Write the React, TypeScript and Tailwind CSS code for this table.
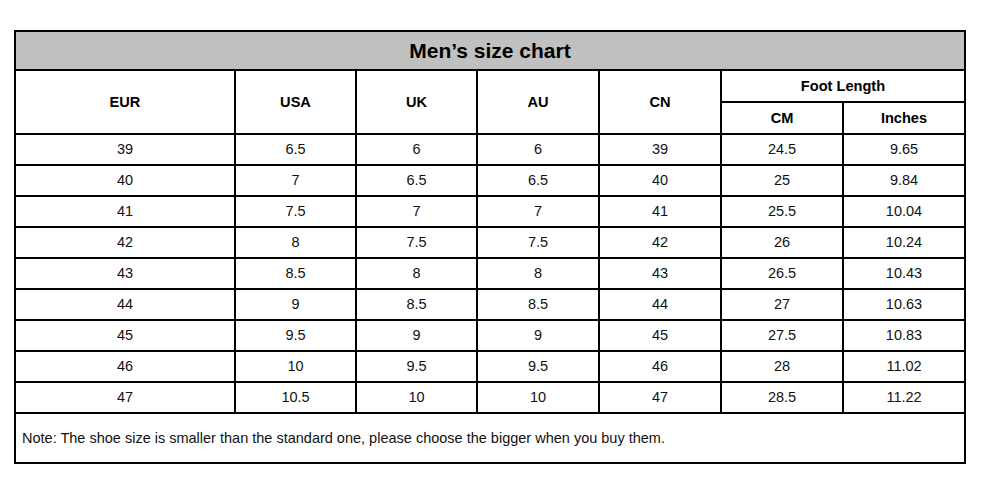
import React from "react";

const rows: string[][] = [
  ["39", "6.5", "6", "6", "39", "24.5", "9.65"],
  ["40", "7", "6.5", "6.5", "40", "25", "9.84"],
  ["41", "7.5", "7", "7", "41", "25.5", "10.04"],
  ["42", "8", "7.5", "7.5", "42", "26", "10.24"],
  ["43", "8.5", "8", "8", "43", "26.5", "10.43"],
  ["44", "9", "8.5", "8.5", "44", "27", "10.63"],
  ["45", "9.5", "9", "9", "45", "27.5", "10.83"],
  ["46", "10", "9.5", "9.5", "46", "28", "11.02"],
  ["47", "10.5", "10", "10", "47", "28.5", "11.22"],
];

export default function App() {
  return (
    <div className="w-[982px] h-[487px] bg-white pt-[30px] pl-[14px] font-['Liberation_Sans',Arial,sans-serif] text-[#111]">
      <div className="grid w-fit bg-black p-[2px] gap-[2px] grid-cols-[218px_119px_119px_120px_120px_120px_120px] grid-rows-[37px_30px_30px_repeat(9,29px)_48px]">
        <div className="col-span-7 bg-[#c0c0c0] flex items-center justify-center text-[21px] font-bold text-black">
          Men’s size chart
        </div>
        {["EUR", "USA", "UK", "AU", "CN"].map((h) => (
          <div key={h} className="row-span-2 bg-white flex items-center justify-center pt-[2px] text-[14.6px] font-bold text-black">
            {h}
          </div>
        ))}
        <div className="col-span-2 bg-white flex items-center justify-center pt-[2px] text-[14.6px] font-bold text-black">
          Foot Length
        </div>
        <div className="bg-white flex items-center justify-center pt-[2px] text-[14.6px] font-bold text-black">CM</div>
        <div className="bg-white flex items-center justify-center pt-[2px] text-[14.6px] font-bold text-black">Inches</div>
        {rows.map((r, i) =>
          r.map((c, j) => (
            <div key={`${i}-${j}`} className="bg-white flex items-center justify-center pt-[1px] text-[14.5px]">
              {c}
            </div>
          ))
        )}
        <div className="col-span-7 bg-white flex items-center pl-[6px] pt-[2px] text-[14.5px]">
          Note: The shoe size is smaller than the standard one, please choose the bigger when you buy them.
        </div>
      </div>
    </div>
  );
}
